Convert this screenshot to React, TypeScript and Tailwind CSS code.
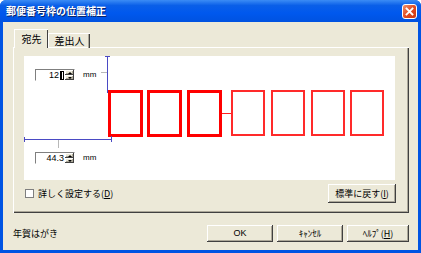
import type { ReactNode } from 'react'

const JP = "font-['Noto_Sans_CJK_JP','Noto_Sans',sans-serif]"

const raised =
  'shadow-[inset_-1px_-1px_0_#404040,inset_1px_1px_0_#ffffff,inset_-2px_-2px_0_#aca899]'

function Button({ children, className = '' }: { children: ReactNode; className?: string }) {
  return (
    <div
      className={`flex items-center justify-center bg-[#ece9d8] text-[9px] leading-none text-black ${raised} ${className}`}
    >
      {children}
    </div>
  )
}

function SpinBox({ value, caret = false, top }: { value: string; caret?: boolean; top: number }) {
  return (
    <div className="absolute left-[11px] flex items-center gap-[8px]" style={{ top }}>
      <div className="flex h-[12px] w-[40px] border border-t-[#7f7f7f] border-l-[#7f7f7f] border-b-white border-r-white bg-white">
        <div className="flex flex-1 items-center justify-end pr-[1px] font-['Liberation_Sans',sans-serif] text-[9px] leading-none text-black">
          {value}
          {caret && (
            <span className="ml-[1px] flex h-[9px] w-[4px] items-center justify-center bg-black">
              <span className="h-[7px] w-[1px] bg-white" />
            </span>
          )}
        </div>
        <div className="flex w-[9px] flex-col bg-[#ece9d8]">
          <div className={`flex flex-1 items-center justify-center ${raised}`}>
            <span className="h-0 w-0 border-x-[2px] border-b-[2px] border-x-transparent border-b-black" />
          </div>
          <div className={`flex flex-1 items-center justify-center ${raised}`}>
            <span className="h-0 w-0 border-x-[2px] border-t-[2px] border-x-transparent border-t-black" />
          </div>
        </div>
      </div>
      <span className="font-['Liberation_Sans',sans-serif] text-[8px] leading-none text-black">mm</span>
    </div>
  )
}

const thick = [84, 123, 163]
const thin = [207, 247, 287, 326]

function Canvas() {
  return (
    <div className="relative h-[124px] w-[371px] bg-white">
      <SpinBox value="12" caret top={13} />
      {/* vertical ruler */}
      <div className="absolute left-[83px] top-0 h-[37px] w-[1px] bg-[#4a4ac4]" />
      <div className="absolute left-[81px] top-0 h-[1px] w-[5px] bg-[#4a4ac4]" />
      <div className="absolute left-[83px] top-[36px] h-[1px] w-[4px] bg-[#4a4ac4]" />
      <div className="absolute left-[77px] top-[16px] h-[1px] w-[6px] bg-[#b8b8b8]" />

      {thick.map((x) => (
        <div
          key={x}
          className="absolute top-[34px] h-[47px] w-[35px] border-[3px] border-[#ff0000]"
          style={{ left: x }}
        />
      ))}
      <div className="absolute left-[198px] top-[57px] h-[1px] w-[10px] bg-[#ff2020]" />
      {thin.map((x) => (
        <div
          key={x}
          className="absolute top-[34px] h-[46px] w-[34px] border-2 border-[#ff2a2a]"
          style={{ left: x }}
        />
      ))}

      {/* horizontal ruler */}
      <div className="absolute left-0 top-[83px] h-[1px] w-[88px] bg-[#4a4ac4]" />
      <div className="absolute left-0 top-[81px] h-[5px] w-[1px] bg-[#4a4ac4]" />
      <div className="absolute left-[87px] top-[80px] h-[6px] w-[1px] bg-[#4a4ac4]" />
      <div className="absolute left-[34px] top-[84px] h-[8px] w-[1px] bg-[#b8b8b8]" />

      <SpinBox value="44.3" top={96} />
    </div>
  )
}

export default function App() {
  return (
    <div className={`flex h-[253px] w-[421px] flex-col overflow-hidden rounded-t-[6px] bg-[#0054e3] ${JP}`}>
      <div className="flex h-[22px] items-center bg-[linear-gradient(#3b8cf5_0%,#0a5fe8_25%,#0058ee_60%,#0052e0_100%)] pl-[6px] pr-[4px]">
        <span className="flex-1 text-[10px] font-bold leading-none text-white [text-shadow:1px_1px_0_#0a246a]">
          郵便番号枠の位置補正
        </span>
        <div className="flex h-[15px] w-[15px] items-center justify-center rounded-[3px] border border-white bg-[linear-gradient(135deg,#f0906a,#e0481f_55%,#c83a14)]">
          <svg width="9" height="9" viewBox="0 0 9 9">
            <path d="M1.5 1.5L7.5 7.5M7.5 1.5L1.5 7.5" stroke="#fff" strokeWidth="1.8" strokeLinecap="square" />
          </svg>
        </div>
      </div>

      <div className="mx-[3px] mb-[3px] flex flex-1 flex-col bg-[#ece9d8] pl-[10px] pr-[9px] pt-[7px]">
        <div className="relative z-10 -mb-[1px] flex items-end pl-[1px]">
          <div className="flex h-[19px] w-[34px] items-center justify-center border-l border-t border-white bg-[#ece9d8] shadow-[inset_-1px_0_0_#404040] text-[10px] leading-none text-black">
            宛先
          </div>
          <div className="flex h-[15px] w-[42px] items-center justify-center border-l border-t border-white shadow-[inset_-1px_0_0_#404040,inset_-2px_0_0_#aca899] text-[10px] leading-none text-black">
            差出人
          </div>
        </div>
        <div className="flex h-[166px] flex-col border-l border-t border-white pl-[10px] pt-[8px] shadow-[inset_-1px_-1px_0_#404040,inset_-2px_-2px_0_#aca899]">
          <Canvas />
          <div className="mt-[4px] flex items-center pr-[13px]">
            <div className="ml-[1px] h-[9px] w-[9px] border border-[#7f7f7f] bg-white" />
            <span className="ml-[4px] flex-1 text-[9px] leading-none text-black">
              詳しく設定する(<span className="underline">D</span>)
            </span>
            <Button className="h-[19px] w-[68px]">
              標準に戻す(<span className="underline">I</span>)
            </Button>
          </div>
        </div>
        <div className="mt-[12px] flex items-center">
          <span className="flex-1 text-[9px] leading-none text-black">年賀はがき</span>
          <div className="flex gap-[4px]">
            <Button className="h-[17px] w-[66px] font-['Liberation_Sans',sans-serif]">OK</Button>
            <Button className="h-[17px] w-[66px]">ｷｬﾝｾﾙ</Button>
            <Button className="h-[17px] w-[62px]">
              ﾍﾙﾌﾟ(<span className="underline">H</span>)
            </Button>
          </div>
        </div>
      </div>
    </div>
  )
}
